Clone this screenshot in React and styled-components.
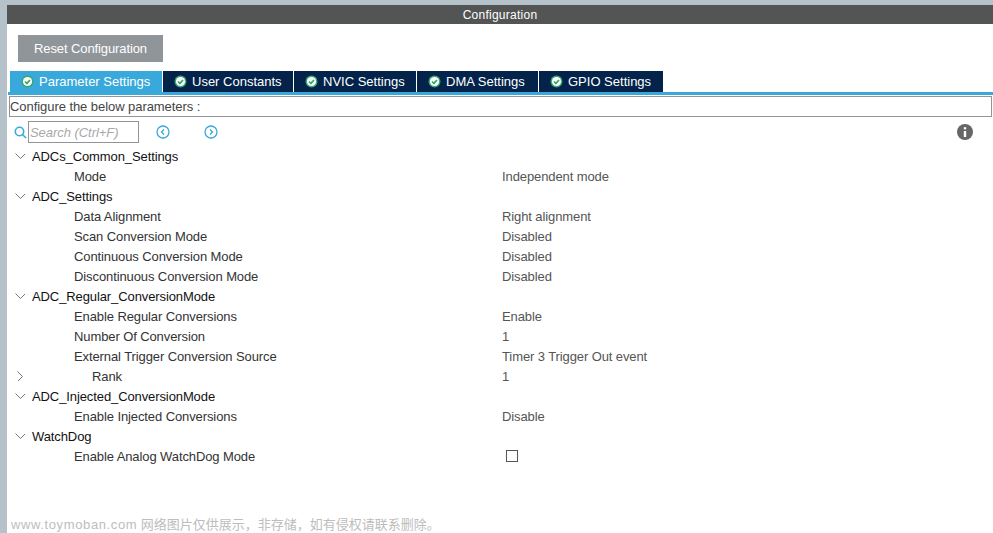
import { createGlobalStyle, styled } from "styled-components";

const GlobalStyle = createGlobalStyle`
  html, body { margin: 0; padding: 0; background: #fff; }
  body { font-family: "Liberation Sans", Arial, sans-serif; }
`;

const tabs = ["Parameter Settings", "User Constants", "NVIC Settings", "DMA Settings", "GPIO Settings"];
const tabWidths = [153, 131, 123, 122, 125];

const tree = [
  { label: "ADCs_Common_Settings", group: true },
  { label: "Mode", value: "Independent mode" },
  { label: "ADC_Settings", group: true },
  { label: "Data Alignment", value: "Right alignment" },
  { label: "Scan Conversion Mode", value: "Disabled" },
  { label: "Continuous Conversion Mode", value: "Disabled" },
  { label: "Discontinuous Conversion Mode", value: "Disabled" },
  { label: "ADC_Regular_ConversionMode", group: true },
  { label: "Enable Regular Conversions", value: "Enable" },
  { label: "Number Of Conversion", value: "1" },
  { label: "External Trigger Conversion Source", value: "Timer 3 Trigger Out event" },
  { label: "Rank", value: "1", nested: true },
  { label: "ADC_Injected_ConversionMode", group: true },
  { label: "Enable Injected Conversions", value: "Disable" },
  { label: "WatchDog", group: true },
  { label: "Enable Analog WatchDog Mode", check: true },
];

const Page = styled.div`
  position: relative;
  width: 993px;
  height: 533px;
  box-sizing: border-box;
  padding: 5px 0 0 7px;
  background: #b6c2c9;
  overflow: hidden;
`;

const Panel = styled.div`
  height: 528px;
  background: #fff;
`;

const TitleBar = styled.div`
  height: 19px;
  background: #535554;
  color: #fff;
  font-size: 12px;
  line-height: 20px;
  letter-spacing: 0.25px;
  text-align: center;
`;

const ButtonRow = styled.div`
  padding: 11px 0 9px 11px;
`;

const ResetButton = styled.button`
  display: block;
  width: 145px;
  height: 27px;
  padding: 0;
  border: 0;
  background: #90959a;
  color: #fff;
  font: 13px "Liberation Sans", Arial, sans-serif;
  letter-spacing: -0.1px;
`;

const TabStrip = styled.div`
  display: flex;
  height: 21px;
  margin-left: 1px;
  padding-left: 2px;
  border-bottom: 3px solid #39a9db;
`;

const Tab = styled.div`
  display: flex;
  align-items: center;
  gap: 5px;
  box-sizing: border-box;
  width: ${(p) => p.$width}px;
  padding-left: 11px;
  background: ${(p) => (p.$active ? "#39a9db" : "#03234b")};
  border-right: 1px solid #fff;
  color: #fff;
  font-size: 13px;
  white-space: nowrap;
`;

const ConfigBox = styled.div`
  box-sizing: border-box;
  height: 21px;
  margin: 1px 1px 0 2px;
  border: 1px solid #90959a;
  color: #444;
  font-size: 13px;
  line-height: 20px;
  letter-spacing: -0.06px;
`;

const SearchRow = styled.div`
  display: flex;
  align-items: center;
  height: 22px;
  margin-top: 4px;
  padding-left: 7px;
`;

const SearchInput = styled.div`
  box-sizing: border-box;
  width: 111px;
  height: 22px;
  margin-left: 1px;
  padding-left: 1px;
  border: 1px solid #90959a;
  color: #a9a9a9;
  font-size: 13px;
  font-style: italic;
  line-height: 21px;
  letter-spacing: -0.05px;
`;

const NavIcon = styled.svg`
  width: 14px;
  height: 14px;
  margin-left: ${(p) => p.$gap}px;
`;

const InfoIcon = styled.svg`
  width: 16px;
  height: 16px;
  margin-left: auto;
  margin-right: 20px;
`;

const Tree = styled.div`
  margin-top: 3px;
`;

const Row = styled.div`
  display: grid;
  grid-template-columns: 495px 1fr;
  height: 20px;
  align-items: center;
  font-size: 13px;
  letter-spacing: -0.1px;
  color: #333;
`;

const RowLabel = styled.div`
  display: flex;
  align-items: center;
  padding-left: ${(p) => (p.$group || p.$nested ? 7 : 67)}px;
  color: ${(p) => (p.$group ? "#111" : "#333")};
`;

const Twist = styled.svg`
  flex: none;
  width: 12px;
  height: 12px;
  margin-right: ${(p) => p.$gap}px;
`;

const RowValue = styled.div`
  color: #555;
`;

const CheckBox = styled.span`
  display: block;
  box-sizing: border-box;
  width: 12px;
  height: 12px;
  margin-left: 4px;
  border: 1px solid #555;
`;

const Watermark = styled.div`
  position: absolute;
  left: 11px;
  bottom: 0;
  color: #bdbdbd;
  font-family: "Liberation Sans", "Noto Sans CJK SC", sans-serif;
  font-size: 13px;
  white-space: nowrap;
`;

const WatermarkUrl = styled.span`
  letter-spacing: 0.62px;
`;

const CheckIcon = () => (
  <svg width="13" height="13" viewBox="0 0 13 13">
    <circle cx="6.5" cy="6.5" r="6" fill="#34a86c" />
    <circle cx="6.5" cy="6.5" r="4.6" fill="#fff" />
    <path d="M4 6.5 L5.9 8.4 L9 5" fill="none" stroke="#34a86c" strokeWidth="1.7" />
  </svg>
);

const ChevronDown = () => (
  <Twist $gap={6} viewBox="0 0 12 12" fill="none" stroke="#777" strokeWidth="1">
    <path d="M1.5 3.5 L6.5 8.5 L11 4" />
  </Twist>
);

const ChevronRight = () => (
  <Twist $gap={66} viewBox="0 0 12 12" fill="none" stroke="#777" strokeWidth="1">
    <path d="M3.5 1.5 L8.5 6.5 L4 11" />
  </Twist>
);

export default function App() {
  return (
    <Page>
      <GlobalStyle />
      <Panel>
        <TitleBar>Configuration</TitleBar>
        <ButtonRow>
          <ResetButton>Reset Configuration</ResetButton>
        </ButtonRow>
        <TabStrip>
          {tabs.map((t, i) => (
            <Tab key={t} $active={i === 0} $width={tabWidths[i]}>
              <CheckIcon />
              {t}
            </Tab>
          ))}
        </TabStrip>
        <ConfigBox>Configure the below parameters :</ConfigBox>
        <SearchRow>
          <svg width="13" height="13" viewBox="0 0 13 13" fill="none" stroke="#39a9db" strokeWidth="1.6">
            <circle cx="5.5" cy="5.5" r="4.2" />
            <path d="M8.5 8.5 L12 12" />
          </svg>
          <SearchInput>Search (Ctrl+F)</SearchInput>
          <NavIcon $gap={17} viewBox="0 0 14 14" fill="none" stroke="#39a9db" strokeWidth="1.3">
            <circle cx="7" cy="7" r="6" />
            <path d="M8 4.5 L5.5 7 L8 9.5" />
          </NavIcon>
          <NavIcon $gap={34} viewBox="0 0 14 14" fill="none" stroke="#39a9db" strokeWidth="1.3">
            <circle cx="7" cy="7" r="6" />
            <path d="M6 4.5 L8.5 7 L6 9.5" />
          </NavIcon>
          <InfoIcon viewBox="0 0 16 16">
            <circle cx="8" cy="8" r="8" fill="#666" />
            <rect x="6.8" y="7" width="2.4" height="6" fill="#fff" />
            <rect x="6.8" y="3.2" width="2.4" height="2.2" fill="#fff" />
          </InfoIcon>
        </SearchRow>
        <Tree>
          {tree.map((r) => (
            <Row key={r.label}>
              <RowLabel $group={r.group} $nested={r.nested}>
                {r.group && <ChevronDown />}
                {r.nested && <ChevronRight />}
                {r.label}
              </RowLabel>
              <RowValue>{r.check ? <CheckBox /> : r.value}</RowValue>
            </Row>
          ))}
        </Tree>
      </Panel>
      <Watermark>
        <WatermarkUrl>www.toymoban.com</WatermarkUrl> 网络图片仅供展示，非存储，如有侵权请联系删除。
      </Watermark>
    </Page>
  );
}
